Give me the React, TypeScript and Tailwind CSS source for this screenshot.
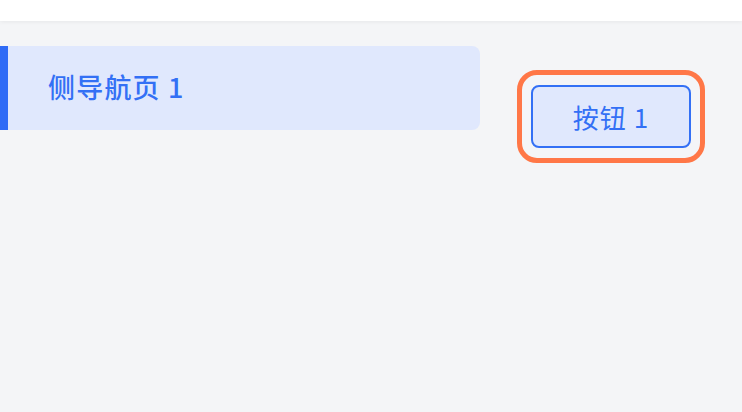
import React from 'react';

const App: React.FC = () => {
  return (
    <div className="w-[742px] h-[412px] overflow-hidden bg-[#f4f5f7] flex flex-col font-['Noto_Sans_CJK_SC','Noto_Sans',sans-serif]">
      <header className="h-[21px] shrink-0 bg-white shadow-[0_1px_4px_rgba(0,0,0,0.06)] relative z-10" />

      <main className="flex flex-1">
        {/* side nav */}
        <nav className="w-[480px] shrink-0 pt-[25px]">
          <div className="h-[84px] flex items-center bg-[#e0e8fd] rounded-r-[8px] border-l-[8px] border-[#2f6bf6] pl-[40px] pb-[4px]">
            <span className="text-[27px] leading-none font-medium tracking-[1.2px] text-[#3370f5]">侧导航页 1</span>
          </div>
        </nav>

        {/* content */}
        <section className="pl-[37px] pt-[49px]">
          <div className="border-[5px] border-[#ff7747] rounded-[20px] px-[9px] py-[10px]">
            <button className="w-[160px] h-[63px] flex items-center justify-center rounded-[8px] border-2 border-[#3370f5] bg-[#e0e8fd] text-[26px] leading-none tracking-[1px] text-[#3370f5]">
              按钮 1
            </button>
          </div>
        </section>
      </main>
    </div>
  );
};

export default App;
